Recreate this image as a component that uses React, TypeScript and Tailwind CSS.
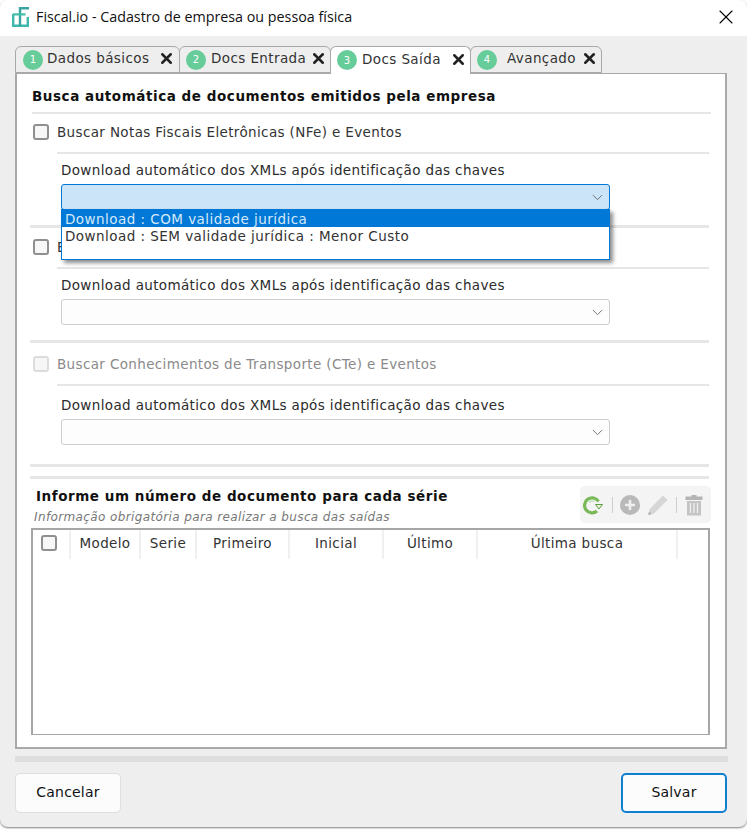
import { X, ChevronDown } from 'lucide-react';

const tabs = [
  { n: 1, label: 'Dados básicos', w: 'w-[165px]', pad: 'pl-[7px]', gap: 'ml-[4px]', closeGap: 'mr-[4px]', active: false },
  { n: 2, label: 'Docs Entrada', w: 'w-[152px]', pad: 'pl-[6px]', gap: 'ml-[5px]', closeGap: 'mr-[3px]', active: false },
  { n: 3, label: 'Docs Saída', w: 'w-[141px]', pad: 'pl-[6px]', gap: 'ml-[5px]', closeGap: 'mr-[3px]', active: true },
  { n: 4, label: 'Avançado', w: 'w-[132px]', pad: 'pl-[6px]', gap: 'ml-[10px]', closeGap: 'mr-[3px]', active: false },
];

const columns = [
  { label: 'Modelo', w: 'w-[70px]' },
  { label: 'Serie', w: 'w-[56px]' },
  { label: 'Primeiro', w: 'w-[93px]' },
  { label: 'Inicial', w: 'w-[94px]' },
  { label: 'Último', w: 'w-[94px]' },
  { label: 'Última busca', w: 'w-[200px]' },
];

function Check({ disabled }: { disabled?: boolean }) {
  return (
    <span
      className={`block w-[16px] h-[16px] rounded-[3px] border-2 shrink-0 ${
        disabled ? 'border-[#dcdcdc] bg-[#f6f6f6]' : 'border-[#8f8f8f] bg-[#f7f7f7]'
      }`}
    />
  );
}

function Divider({ className = '' }: { className?: string }) {
  return <div className={`h-[2px] bg-[#e6e6e6] ${className}`} />;
}

function Section({
  title,
  disabled,
  open,
  labelGap = 'mt-[6px]',
}: {
  title: string;
  disabled?: boolean;
  open?: boolean;
  labelGap?: string;
}) {
  return (
    <div>
      <div className={`flex items-center h-[20px] ml-[2px] ${disabled ? 'text-[#8a8a8a]' : 'text-[#333]'}`}>
        <Check disabled={disabled} />
        <span className="ml-[8px] whitespace-nowrap">{title}</span>
      </div>
      <Divider className="ml-[26px] mr-[1px] mt-[10px]" />
      <div className={`ml-[30px] ${labelGap} h-[20px] leading-[20px] text-[#2b2b2b] whitespace-nowrap`}>
        Download automático dos XMLs após identificação das chaves
      </div>
      <div className="relative ml-[30px] w-[549px] mt-[4px]">
        <div
          className={`h-[26px] rounded-[3px] border flex items-center justify-end pr-[3px] ${
            open ? 'bg-[#cce4f7] border-[#0078d7]' : 'bg-[#fdfdfd] border-[#cdcdcd]'
          }`}
        >
          <ChevronDown size={17} strokeWidth={1.3} className="text-[#666]" />
        </div>
        {open && (
          <div className="absolute z-10 left-0 top-[25px] w-[549px] h-[51px] bg-white border border-[#0078d7] shadow-[3px_3px_4px_rgba(0,0,0,0.45)] leading-[19px] text-[#333] tracking-[0.46px]">
            <div className="h-[17px] pl-[3px] bg-[#0078d7] text-[#d5e8f8]">Download : COM validade jurídica</div>
            <div className="h-[17px] pl-[3px]">Download : SEM validade jurídica : Menor Custo</div>
          </div>
        )}
      </div>
    </div>
  );
}

function Logo() {
  return (
    <svg width="18" height="20" viewBox="0 0 18 20" fill="none" className="shrink-0">
      <path d="M1.2 7v11.8h14.6V10" stroke="#3fb8ae" strokeWidth="2.4" />
      <path d="M8 19V1.2h9" stroke="#3aa5a0" strokeWidth="2.4" />
      <path d="M1 7.4h12.5" stroke="#45bfa8" strokeWidth="2.4" />
    </svg>
  );
}

function Refresh() {
  return (
    <svg width="22" height="22" viewBox="0 0 22 22" fill="none" className="shrink-0">
      <path d="M16.5 7.5A7.5 7.5 0 1 0 15 17" stroke="#79b957" strokeWidth="3.2" />
      <path d="M7.2 8.5a4 4 0 0 1 5-1" stroke="#b5dca0" strokeWidth="1.2" />
      <path d="M13.5 10.5h7l-3.5 4.5z" fill="#e6f3df" stroke="#5e9f3f" strokeWidth="1" />
    </svg>
  );
}

function PlusCircle() {
  return (
    <svg width="20" height="20" viewBox="0 0 20 20" className="shrink-0">
      <circle cx="10" cy="10" r="10" fill="#b9b9b9" />
      <path d="M10 5v10M5 10h10" stroke="#efefef" strokeWidth="2.6" />
    </svg>
  );
}

function PencilSolid() {
  return (
    <svg width="22" height="22" viewBox="0 0 22 22" className="shrink-0">
      <path d="M16 1.5l4.5 4.5L7 19.5 1.2 21l1.5-6z" fill="#d6d6d6" />
      <path d="M1.2 21l1-3.6 2.6 2.6z" fill="#b0b0b0" />
    </svg>
  );
}

function TrashSolid() {
  return (
    <svg width="18" height="22" viewBox="0 0 18 22" className="shrink-0">
      <path d="M6.5 2.5V1h5v1.5H17.5V6H.5V2.5z" fill="#b4b4b4" />
      <path d="M2 7h14v14.5H2z" fill="#c4c4c4" />
      <path d="M5.5 9v10M9 9v10M12.5 9v10" stroke="#f0f0f0" strokeWidth="1.3" />
    </svg>
  );
}

export default function App() {
  return (
    <div className="w-[747px] h-[835px] bg-white overflow-hidden">
      <div className="w-[747px] h-[827px] bg-[#eeeeee] rounded-[8px] overflow-hidden shadow-[0_1px_2px_rgba(0,0,0,0.5)] flex flex-col">
        <div className="h-[36px] bg-white flex items-center pl-[12px] pr-[9px] pb-[2px] shrink-0">
          <Logo />
          <span className="ml-[6px] text-[14.3px] text-[#111] font-['Open_Sans',sans-serif]">
            Fiscal.io - Cadastro de empresa ou pessoa física
          </span>
          <X size={24} strokeWidth={1.1} className="ml-auto text-black" />
        </div>

        <div className="px-[15px] pt-[10px] font-['DejaVu_Sans',sans-serif] text-[13.5px] tracking-[0.36px]">
          <div className="flex h-[27px] relative z-[1]">
            {tabs.map((t) => (
              <div
                key={t.n}
                className={`${t.w} ${t.pad} flex items-center border border-[#a9a9a9] rounded-t-[6px] -mr-[1px] ${
                  t.active ? 'bg-white border-b-0 h-[28px] pb-[1px]' : 'bg-[#eeeeee] h-[27px]'
                }`}
              >
                <span className="w-[20px] h-[20px] rounded-full bg-[#66cc99] text-white text-[10px] flex items-center justify-center shrink-0">
                  {t.n}
                </span>
                <span className={`${t.gap} -mt-[2px] text-[#333] whitespace-nowrap tracking-[0.4px]`}>{t.label}</span>
                <X size={17} strokeWidth={3.5} className={`ml-auto ${t.closeGap} -mt-[2px] text-[#222] shrink-0`} />
              </div>
            ))}
          </div>

          <div className="w-[712px] h-[676px] bg-white border-2 border-t border-[#a9a9a9] pl-[14px] pr-[15px] pt-[12px]">
            <div className="h-[20px] leading-[20px] font-bold text-[#111] pl-[1px] tracking-[0.55px] whitespace-nowrap">
              Busca automática de documentos emitidos pela empresa
            </div>
            <Divider className="mt-[6px] mb-[8px] -mr-[1px] ml-[1px]" />
            <Section title="Buscar Notas Fiscais Eletrônicas (NFe) e Eventos" open />
            <Divider className="mt-[15px] mb-[9px] h-[3px] -ml-[1px] mr-[1px]" />
            <Section title="Buscar Notas Fiscais de Consumidor (NFCe) e Eventos" />
            <Divider className="mt-[15px] mb-[11px] h-[3px] -ml-[1px] mr-[1px]" />
            <Section title="Buscar Conhecimentos de Transporte (CTe) e Eventos" disabled labelGap="mt-[9px]" />
            <Divider className="mt-[19px] h-[3px] -ml-[1px] mr-[1px]" />
            <Divider className="mt-[9px] h-[3px] -ml-[1px] mr-[1px]" />

            <div className="relative h-[49px] pl-[5px] pt-[7px]">
              <div className="h-[20px] leading-[20px] font-bold text-[#111] tracking-[0.55px] whitespace-nowrap">
                Informe um número de documento para cada série
              </div>
              <div className="mt-[4px] text-[12px] italic text-[#777] -ml-[2px] leading-[14px] tracking-[0.38px] whitespace-nowrap">
                Informação obrigatória para realizar a busca das saídas
              </div>
              <div className="absolute right-[-1px] top-[7px] w-[131px] h-[37px] bg-[#f4f4f4] rounded-[5px] flex items-center pl-[2px]">
                <Refresh />
                <span className="ml-[8px] h-[16px] w-px bg-[#cccccc]" />
                <span className="ml-[7px]">
                  <PlusCircle />
                </span>
                <span className="ml-[7px]">
                  <PencilSolid />
                </span>
                <span className="ml-[7px] h-[16px] w-px bg-[#cccccc]" />
                <span className="ml-[8px]">
                  <TrashSolid />
                </span>
              </div>
            </div>

            <div className="h-[207px] border-2 border-b border-[#a6a6a6] bg-white">
              <div className="flex h-[29px] text-[#333]">
                <div className="w-[36px] flex items-center pl-[8px] pb-[3px]">
                  <Check />
                </div>
                {columns.map((c) => (
                  <div
                    key={c.label}
                    className={`${c.w} flex items-center justify-center pb-[3px] border-l-2 border-[#f0f0f0]`}
                  >
                    {c.label}
                  </div>
                ))}
                <div className="w-[2px] bg-[#f0f0f0]" />
              </div>
            </div>
          </div>
          <div className="mt-[7px] h-[6px] w-[713px] bg-[#dedede]" />
        </div>

        <div className="flex justify-between pl-[15px] pr-[20px] mt-[11px] font-['DejaVu_Sans',sans-serif] text-[14px] tracking-[0.2px] text-[#111]">
          <button className="w-[106px] h-[40px] rounded-[5px] border border-[#dedede] bg-[#fcfcfc] pb-[1px]">Cancelar</button>
          <button className="w-[106px] h-[40px] rounded-[5px] border-2 border-[#0f7fd0] bg-[#fcfcfc] pb-[1px]">Salvar</button>
        </div>
      </div>
    </div>
  );
}
